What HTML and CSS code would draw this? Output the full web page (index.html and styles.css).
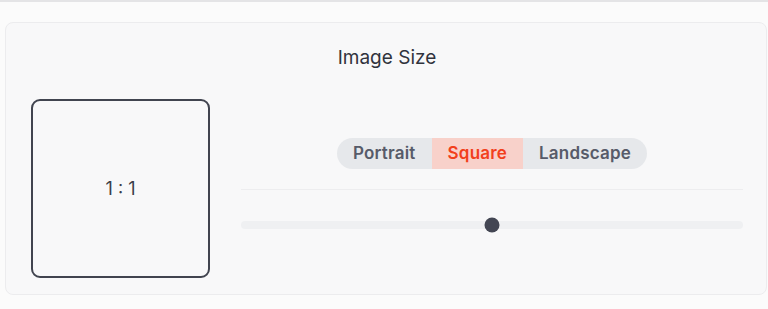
FILE: index.html
```html
<!DOCTYPE html>
<html lang="en">
<head>
<meta charset="utf-8">
<title>Image Size</title>
<link rel="stylesheet" href="styles.css">
</head>
<body>
<div class="topbar"></div>
<main class="page">
  <section class="card">
    <h2 class="card-title">Image Size</h2>
    <div class="card-body">
      <div class="preview"><span class="ratio">1 : 1</span></div>
      <div class="controls">
        <div class="segmented">
          <button class="seg">Portrait</button>
          <button class="seg seg-active">Square</button>
          <button class="seg">Landscape</button>
        </div>
        <div class="divider"></div>
        <div class="slider">
          <div class="track">
            <span class="thumb" style="left: 50%"></span>
          </div>
        </div>
      </div>
    </div>
  </section>
</main>
</body>
</html>
```

FILE: styles.css
```css
* { box-sizing: border-box; }

html, body {
  margin: 0;
  padding: 0;
  background: #fbfbfb;
  font-family: Inter, "Noto Sans", sans-serif;
  color: #374151;
}

.topbar {
  height: 2px;
  background: #e4e4e6;
}

.page {
  padding: 20px 0 0 5px;
}

.card {
  width: 762px;
  height: 273px;
  background: #f8f8f9;
  border: 1px solid #ececee;
  border-radius: 8px;
  padding: 21px 23px 16px 25px;
}

.card-title {
  margin: 0;
  text-align: center;
  font-size: 19px;
  line-height: 28px;
  font-weight: 400;
  color: #30333d;
}

.card-body {
  margin-top: 27px;
  display: flex;
  align-items: center;
  gap: 31px;
}

.preview {
  flex: none;
  width: 179px;
  height: 179px;
  border: 2px solid #41444f;
  border-radius: 9px;
  display: flex;
  align-items: center;
  justify-content: center;
}

.ratio {
  font-size: 18px;
  color: #3b3e4a;
}

.controls {
  flex: 1;
  display: flex;
  flex-direction: column;
  align-items: center;
  padding-bottom: 7px;
}

.segmented {
  display: inline-flex;
  background: #e6e8eb;
  border-radius: 999px;
  overflow: hidden;
}

.seg {
  border: 0;
  margin: 0;
  background: transparent;
  font-family: inherit;
  font-size: 17px;
  font-weight: 600;
  letter-spacing: 0.2px;
  line-height: 31px;
  padding: 0 16px;
  color: #575b69;
  cursor: pointer;
}

.seg-active {
  background: #f8d1ca;
  color: #f2401c;
}

.divider {
  align-self: stretch;
  height: 1px;
  background: #ededef;
  margin-top: 20px;
}

.slider {
  align-self: stretch;
  margin-top: 27px;
  height: 15px;
  display: flex;
  align-items: center;
}

.track {
  position: relative;
  width: 100%;
  height: 8px;
  border-radius: 4px;
  background: #eff0f2;
}

.thumb {
  position: absolute;
  top: 50%;
  width: 15px;
  height: 15px;
  border-radius: 50%;
  background: #434653;
  transform: translate(-50%, -50%);
}
```
